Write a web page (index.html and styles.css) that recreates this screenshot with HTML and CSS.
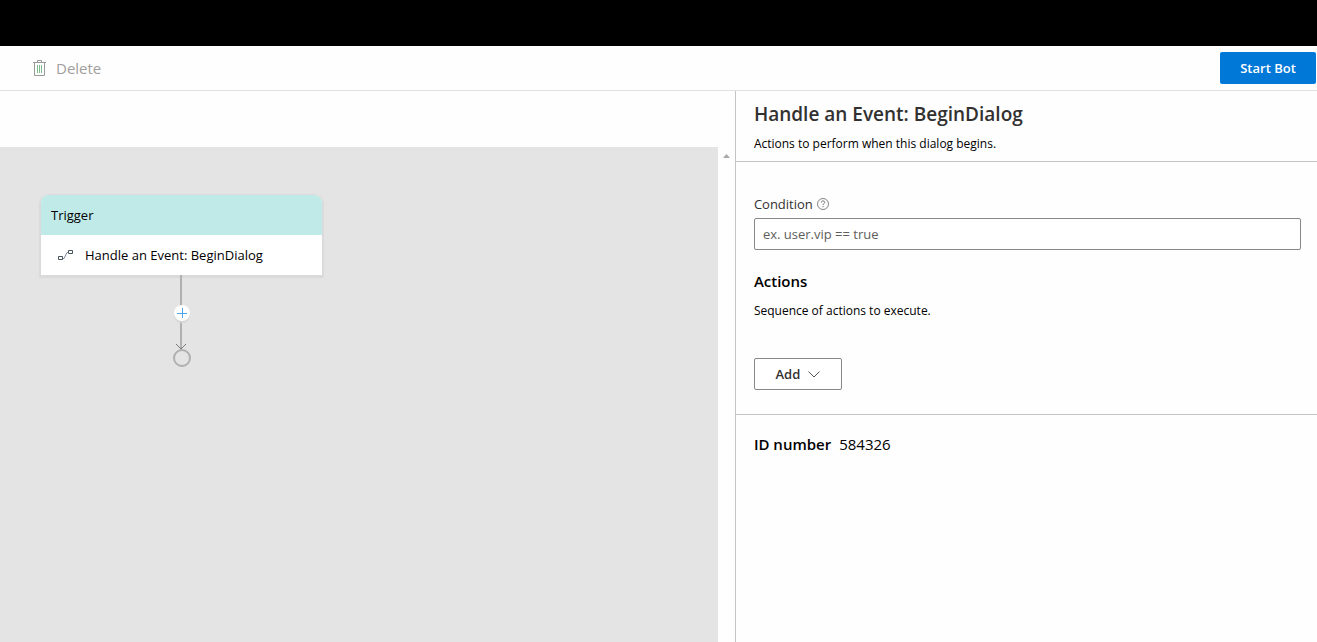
FILE: index.html
```html
<!DOCTYPE html>
<html lang="en">
<head>
<meta charset="utf-8">
<title>Dialog designer</title>
<link rel="stylesheet" href="styles.css">
</head>
<body>
<header class="banner"></header>
<div class="toolbar">
  <button class="delete" type="button" disabled>
    <svg width="13" height="16" viewBox="0 0 13 16" fill="none" stroke="#999"><path d="M0 2.500h13M4.500 2V.5h4V2M1.500 3v12.500h10V3"/><path stroke="#7dba8c" d="M4.500 5v8M6.500 5v8M8.500 5v8"/></svg>
    <span>Delete</span>
  </button>
  <button class="start" type="button">Start Bot</button>
</div>
<main class="workspace">
  <section class="editor" aria-label="Visual editor">
    <div class="canvas">
      <div class="flow">
        <article class="node">
          <h2 class="node-head">Trigger</h2>
          <div class="node-body">
            <svg width="15" height="11" viewBox="0 0 15 11" fill="none" stroke="#46525c"><path d="M.5 6.500h4v3h-4zM10.500.5h4v3h-4z"/><path stroke="#7a8794" d="M5 8.500h1L9 2.500h1.500"/></svg>
            <span>Handle an Event: BeginDialog</span>
          </div>
        </article>
        <div class="edge">
          <svg class="edge-line" width="20" height="93" viewBox="0 0 20 93" fill="none"><path stroke="#b0b0b0" stroke-width="2" d="M9 0v74"/><path stroke="#777" d="M4 69l5 5 5-5"/><circle cx="10" cy="83" r="8" stroke="#b0b0b0" stroke-width="2"/></svg>
          <button class="insert" type="button" aria-label="Add action"><svg width="10" height="10" viewBox="0 0 10 10" fill="none" stroke="#4da3e8"><path d="M0 5.500h10M5.500 0v10"/></svg></button>
        </div>
      </div>
    </div>
    <div class="scrollbar"><svg width="7" height="4" viewBox="0 0 7 4" fill="#a8a8a8"><path d="M0 4L3.500 0 7 4z"/></svg></div>
  </section>
  <aside class="properties">
    <header class="intro">
      <h1>Handle an Event: BeginDialog</h1>
      <p>Actions to perform when this dialog begins.</p>
    </header>
    <div class="form">
      <div class="label-row">
        <label for="condition">Condition</label>
        <svg width="12" height="12" viewBox="0 0 12 12" fill="none" stroke="#666"><circle cx="6" cy="6" r="5.500" stroke-width=".8"/><path stroke-width=".9" d="M4.300 4.500c0-2.300 3.400-2.100 3.400-.1 0 1.300-1.700 1.200-1.700 2.600M6 8v1.200"/></svg>
      </div>
      <input id="condition" class="condition" type="text" placeholder="ex. user.vip == true">
      <h2 class="actions-title">Actions</h2>
      <p>Sequence of actions to execute.</p>
      <button class="add" type="button">Add <svg width="12" height="7" viewBox="0 0 12 7" fill="none" stroke="#555"><path d="M.5.5L6 6 11.500.5"/></svg></button>
    </div>
    <div class="identifier"><strong>ID number</strong><span>584326</span></div>
  </aside>
</main>
</body>
</html>
```
FILE: styles.css
```css
* { box-sizing: border-box; }
body {
  margin: 0;
  min-height: 100vh;
  display: flex;
  flex-direction: column;
  background: #fefefe;
  color: #000;
  font: 13px/20px "Open Sans", "Noto Sans", sans-serif;
}
h1, h2, p { margin: 0; }
button, input { font: inherit; }
svg { display: block; flex: none; }
.banner { height: 46px; background: #000; }
.toolbar {
  display: flex;
  align-items: center;
  justify-content: space-between;
  height: 45px;
  padding: 0 1px 0 33px;
  border-bottom: 1px solid #e1e1e1;
}
.delete {
  display: flex;
  align-items: center;
  gap: 10px;
  padding: 0;
  border: 0;
  background: none;
  color: #a19f9d;
  font-size: 15px;
}
.start {
  width: 96px;
  height: 32px;
  padding: 0;
  border: 0;
  border-radius: 2px;
  background: #0078d7;
  color: #fff;
  font-weight: 600;
}
.workspace { flex: 1; display: flex; }
.editor { flex: 1; display: flex; padding-top: 56px; }
.canvas { flex: 1; padding: 48px 40px; background: #e4e4e4; }
.flow { width: 284px; }
.node {
  margin: 0 2px 0 1px;
  border-radius: 8px 8px 0 0;
  background: #fff;
  box-shadow: 0 1px 1px 2px #dadada;
}
.node-head {
  padding: 10px;
  border-radius: 8px 8px 0 0;
  background: #bfeae8;
  font-size: 13px;
  font-weight: 400;
}
.node-body {
  display: flex;
  align-items: center;
  gap: 12px;
  height: 40px;
  padding: 0 17px;
}
.edge { position: relative; display: flex; justify-content: center; }
.insert {
  position: absolute;
  top: 30px;
  display: flex;
  align-items: center;
  justify-content: center;
  width: 16px;
  height: 16px;
  padding: 0;
  border: 0;
  border-radius: 50%;
  background: #fff;
  box-shadow: 0 2px 1px #d6d6d6;
}
.scrollbar { width: 17px; padding: 7px 5px; }
.properties { width: 44.2%; border-left: 1px solid #c4c4c4; font-size: 12px; }
.intro { padding: 9px 18px 7px; border-bottom: 1px solid #c4c4c4; }
.intro h1 {
  margin-bottom: 6px;
  color: #323130;
  font-size: 19px;
  font-weight: 600;
  line-height: 28px;
}
.form { padding: 32px 16px 24px 18px; border-bottom: 1px solid #c4c4c4; }
.label-row {
  display: flex;
  align-items: center;
  gap: 4px;
  margin-bottom: 4px;
  color: #323130;
  font-size: 13px;
}
.condition {
  display: block;
  width: 100%;
  height: 32px;
  padding: 0 8px;
  border: 1px solid #8a8886;
  border-radius: 2px;
  background: #fff;
  color: #323130;
  font-size: 13px;
}
.condition::placeholder { color: #605e5c; opacity: 1; }
.actions-title { margin: 21px 0 10px; font-size: 15px; font-weight: 600; }
.add {
  display: flex;
  align-items: center;
  justify-content: center;
  gap: 8px;
  width: 88px;
  height: 32px;
  margin-top: 37px;
  padding: 0;
  border: 1px solid #8a8886;
  border-radius: 2px;
  background: #fff;
  color: #323130;
  font-size: 13px;
  font-weight: 600;
}
.identifier { display: flex; gap: 8px; padding: 19px 18px; font-size: 15px; }
.identifier strong { font-weight: 600; }
```
